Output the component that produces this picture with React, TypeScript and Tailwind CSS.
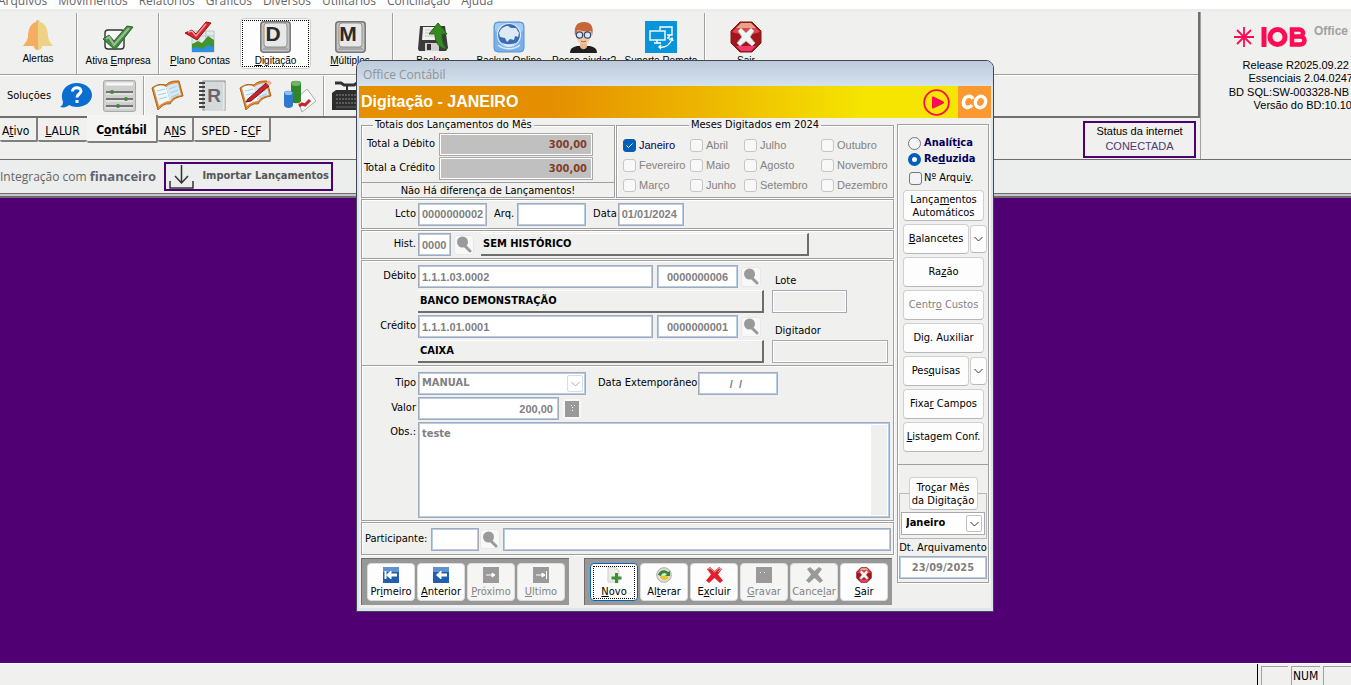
import { ReactNode } from "react";
import clsx from "clsx";

const tahoma = "font-['DejaVu_Sans_Condensed','DejaVu_Sans',sans-serif]";
const arial = "font-['Liberation_Sans',Arial,sans-serif]";
const segoe = "font-['Open_Sans','Noto_Sans',sans-serif]";
const etched = "border border-[#a0a0a0] shadow-[inset_1px_1px_0_#fff,1px_1px_0_#fff]";
const frame = "border border-[#a3a9b5] bg-white shadow-[inset_0_0_0_1px_#b5cdea]";
const field = "h-[23px] px-[3px] text-[11px] font-bold text-[#808080] outline-none";

/* underlines the access key, marked with & in the text */
function Label({ text }: { text: string }) {
    const i = text.indexOf("&");
    if (i < 0) return <>{text}</>;
    return (
        <>
            {text.slice(0, i)}<u>{text[i + 1]}</u>{text.slice(i + 2)}
        </>
    );
}

function BellIcon() {
    return (
        <svg width="30" height="30" viewBox="0 0 30 30">
            <path d="M15 0c-2 0-2 2-2 2C7 4 6 8 5 15c0 5-2 7-5 11h15z" fill="#f3ae62" />
            <path d="M15 0c2 0 2 2 2 2 6 2 7 6 8 13 0 5 2 7 5 11H15z" fill="#eed384" />
            <path d="M11 26h4v4c-3 0-4-2-4-4z" fill="#f3ae62" />
            <path d="M15 26h4c0 2-1 4-4 4z" fill="#eed384" />
        </svg>
    );
}

function CheckBoxIcon() {
    return (
        <svg width="32" height="32" viewBox="0 0 32 32">
            <rect x="3" y="9" width="19" height="19" rx="3" fill="#f8f8f8" stroke="#333" strokeWidth="1.4" />
            <path d="M1 18l6-4 5 6L25 5l6 1-18 23z" fill="#3f8f3a" stroke="#2c6a28" />
            <path d="M4 18l3-2 5 8L27 7" fill="none" stroke="#a5b8a5" strokeWidth="2" />
        </svg>
    );
}

function PlanIcon() {
    return (
        <svg width="32" height="32" viewBox="0 0 32 32">
            <rect x="8" y="10" width="22" height="21" fill="#e1e9ec" stroke="#b9c4ca" />
            <path d="M8 15h22M15 10v10M22 10v10" stroke="#b9c4ca" />
            <path d="M8 23l6-3 4 2 6-7 6 4v9H8z" fill="#43952b" />
            <path d="M8 27l5-1 5 2 6-4 6 2v5H8z" fill="#2d8fe0" />
            <path d="M1 12l7-3 4 4L22 1l5 1-14 17z" fill="#d9262c" stroke="#8e1216" />
            <path d="M4 11l4-1 4 5L22 3" fill="none" stroke="#f4a0a0" strokeWidth="1.3" />
        </svg>
    );
}

function KeyIcon({ letter }: { letter: string }) {
    return (
        <svg width="31" height="32" viewBox="0 0 31 32">
            <rect x="0.8" y="0.8" width="29.4" height="30.4" rx="3" fill="#c4c4c4" stroke="#757575" strokeWidth="1.5" />
            <path d="M2 29l4-4h19l4 4z" fill="#a8a8a8" />
            <rect x="4" y="2" width="23" height="24" rx="3" fill="#e8e8e8" stroke="#909090" />
            <text x="13" y="20" textAnchor="middle" fontFamily="Liberation Sans" fontWeight="bold" fontSize="21" fill="#2b2b2b">{letter}</text>
        </svg>
    );
}

function BackupIcon() {
    return (
        <svg width="32" height="32" viewBox="0 0 32 32">
            <path d="M3 5h25l3 22-2 3H2l-1-2z" fill="#3b3b3b" />
            <path d="M6 6h18l1 13H5z" fill="#f0f0f0" />
            <path d="M8 9h13M8 12h13M8 15h13" stroke="#c5c5c5" />
            <rect x="8" y="22" width="14" height="8" fill="#cfcfcf" />
            <rect x="10" y="23" width="4" height="6" fill="#333" />
            <path d="M21 2l9 11h-5c0 7 1 11 5 15-8-1-12-6-12-15h-6z" fill="#358a22" stroke="#236614" />
        </svg>
    );
}

function GlobeIcon() {
    return (
        <svg width="32" height="32" viewBox="0 0 32 32">
            <rect x="1" y="1" width="30" height="30" rx="4" fill="#78b0ea" stroke="#5b92d0" />
            <rect x="2" y="2" width="28" height="9" rx="3" fill="#a5cdf4" />
            <circle cx="16" cy="14" r="11.5" fill="#3a6db4" stroke="#e1edf9" strokeWidth="1.2" />
            <path d="M6 12c2-5 5-7 9-7l3 2 5 0 3 5-1 4-3-1-1 4-4-1-3 3-2-4-5-1z" fill="#dfe9f5" />
            <path d="M8 21c4 3 12 3 16 0l-3 3c-3 2-7 2-10 0z" fill="#dfe9f5" />
            <path d="M5 24c6 5 16 5 22 0" stroke="#e1edf9" strokeWidth="1.5" fill="none" />
        </svg>
    );
}

function PersonIcon() {
    return (
        <svg width="30" height="32" viewBox="0 0 30 32">
            <path d="M1 32c0-5 4-7 9-7h9c5 0 9 2 9 7z" fill="#1f1f1f" />
            <path d="M11 20h7v6c-2 3-5 3-7 0z" fill="#e8b890" />
            <ellipse cx="14.5" cy="14" rx="7.5" ry="9" fill="#f1cba6" />
            <path d="M6 15C5 6 7 1 15 1s10 6 8 14l-1-5c-4 1-9 0-13-1-1 1-2 3-3 6z" fill="#c76638" />
            <circle cx="10.5" cy="14" r="3.2" fill="#dce6f2" stroke="#37446b" strokeWidth="1.2" />
            <circle cx="18.5" cy="14" r="3.2" fill="#dce6f2" stroke="#37446b" strokeWidth="1.2" />
            <path d="M12 20c1 1 4 1 5 0" stroke="#c8463b" fill="none" />
        </svg>
    );
}

function RemoteIcon() {
    return (
        <svg width="32" height="32" viewBox="0 0 32 32" fill="none" stroke="#fff" strokeWidth="1.4">
            <rect width="32" height="32" fill="#0894da" stroke="none" />
            <path d="M15 9V6h12v8h-5M24 14v3h-2" />
            <rect x="5" y="10" width="15" height="9" fill="#0894da" />
            <path d="M12 19v3M9 22h7M14 26c6 1 11-2 13-8M24 19l3-2 1 3M16 24l-2 2 2 2" />
        </svg>
    );
}

function StopIcon({ size }: { size: number }) {
    return (
        <svg width={size} height={size} viewBox="0 0 32 32">
            <path d="M10 1h12l9 9v12l-9 9H10l-9-9V10z" fill="#a3161c" stroke="#80181a" />
            <path d="M11 2h10l5 5H6z" fill="#e8a489" />
            <path d="M6 7h20l4 4c-8 3-20 3-28 0z" fill="#e2444c" />
            <path d="M6 25h20l-5 5H11z" fill="#f2396a" />
            <path d="M8 10l3-3 5 5 5-5 3 3-4 6 5 6-3 3-6-5-6 5-3-3 5-6z" fill="#f4f4f4" stroke="#b9b9b9" />
        </svg>
    );
}

function HelpIcon() {
    return (
        <svg width="32" height="26" viewBox="0 0 32 26">
            <path d="M17 0c8 0 15 5 15 12s-7 12-15 12c-3 0-6-1-8-2-2 2-5 3-9 2 2-1 3-3 3-5-4-10 3-19 14-19z" fill="#0a6ed1" />
            <path d="M12.500 8.500c0-5 8.500-5 8.500-.5 0 3-4 3-4 6.500M17 17v3" fill="none" stroke="#fff" strokeWidth="3" />
        </svg>
    );
}

function SlidersIcon() {
    return (
        <svg width="33" height="32" viewBox="0 0 33 32">
            <rect x="0.5" y="0.5" width="32" height="31" rx="2" fill="#cfcfcf" stroke="#aaa" />
            <path d="M3 4h27" stroke="#f7f7f7" strokeWidth="3" />
            <path d="M3 12h27M3 19h27M3 26h27" stroke="#555" strokeWidth="1.6" />
            <path d="M3 14h27M3 21h27M3 28h27" stroke="#f5f5f5" />
            <circle cx="9" cy="12" r="2" fill="#43853a" />
            <circle cx="23" cy="19" r="2" fill="#43853a" />
            <circle cx="15" cy="26" r="2" fill="#43853a" />
        </svg>
    );
}

function BookIcon({ pencil }: { pencil?: boolean }) {
    return (
        <svg width="33" height="32" viewBox="0 0 33 32">
            <path d="M1 8c5-4 9-4 14-3 4-4 8-4 13-4l4 15c-6 1-10 3-13 8-5-1-8 2-12 6z" fill="#e08a35" stroke="#a95e1b" />
            <path d="M3 8c4-3 8-3 12-1l4 14c-4 0-8 2-11 5z" fill="#eef7fc" />
            <path d="M15 7c4-3 8-4 12-4l3 12c-5 1-8 2-11 6z" fill="#d3e9f7" />
            <path d="M6 11l8-2M7 15l8-2M8 19l8-2M18 9l8-3M19 13l8-3M20 17l8-3" stroke="#a9cce2" />
            {pencil && (
                <>
                    <path d="M9 19L27 3l3 3-18 15-5 1z" fill="#c8222a" stroke="#7e1216" />
                    <path d="M27 3l3-3 3 3-3 3z" fill="#e9b3a2" />
                </>
            )}
        </svg>
    );
}

function NotebookIcon() {
    return (
        <svg width="29" height="32" viewBox="0 0 29 32">
            <rect x="5" y="1" width="22" height="29" fill="#d6d9da" stroke="#8d9294" />
            <path d="M26 3v27H7" stroke="#f7f7f7" fill="none" />
            <path d="M1 3h6M1 7h6M1 11h6M1 15h6M1 19h6M1 23h6M1 27h6" stroke="#444" strokeWidth="1.8" />
            <text x="16" y="22" textAnchor="middle" fontFamily="Liberation Sans" fontWeight="bold" fontSize="19" fill="#63666e">R</text>
        </svg>
    );
}

function ChartIcon() {
    return (
        <svg width="33" height="33" viewBox="0 0 33 33">
            <path d="M14 18l10-9 9 12-14 11z" fill="#f9f9f9" stroke="#aaa" />
            <path d="M16 26l3-2 3 1 5-5" stroke="#c8222a" strokeWidth="3" fill="none" />
            <path d="M8 3c0-3 10-3 10 0v18c0 3-10 3-10 0z" fill="#31852d" />
            <ellipse cx="13" cy="3.500" rx="4.500" ry="2.500" fill="#71b568" />
            <path d="M1 13c0-3 9-3 9 0v12c0 4-9 4-9 0z" fill="#2f78cf" />
            <ellipse cx="5.500" cy="13" rx="4" ry="2" fill="#8cc1f0" />
        </svg>
    );
}

function CalculatorIcon() {
    return (
        <svg width="36" height="30" viewBox="0 0 36 30">
            <path d="M4 2h6l3 2h10l3-2h9" stroke="#333" strokeWidth="3" fill="none" />
            <path d="M16 4v5" stroke="#333" strokeWidth="2" />
            <path d="M1 12l4-3h31v20H1z" fill="#2d2d2d" />
            <path d="M5 14h28M5 18h28M5 22h28" stroke="#8a8a8a" strokeDasharray="2 1" />
            <path d="M5 26h25" stroke="#666" />
        </svg>
    );
}

function SearchButton({ label }: { label: string }) {
    return (
        <button aria-label={label} className="flex size-[20px] shrink-0 items-center justify-center rounded-[3px] border border-[#e8e8e8] bg-[#f8f8f8]">
            <svg width="16" height="17" viewBox="0 0 16 17">
                <circle cx="6.500" cy="6" r="5.500" fill="#9a9a9a" />
                <path d="M8 9l6 6" stroke="#9a9a9a" strokeWidth="3" strokeLinecap="round" />
            </svg>
        </button>
    );
}

/* toolbar button of the main window */
function Tool({ text, icon, className }: { text: string; icon: ReactNode; className: string }) {
    return (
        <button className={clsx("flex shrink-0 flex-col items-center whitespace-nowrap text-[10px] leading-[14px] text-black", arial, className)}>
            <span className="flex h-[32px] items-center">{icon}</span>
            <span className="pt-px"><Label text={text} /></span>
        </button>
    );
}

function Separator() {
    return <div className="w-[2px] shrink-0 self-stretch border-l border-r border-l-[#a0a0a0] border-r-white" />;
}

const menus = ["Arquivos", "Movimentos", "Relatórios", "Gráficos", "Diversos", "Utilitários", "Conciliação", "Ajuda"];
const tab = "h-[24px] rounded-b-[2px] border-b-2 border-[#808080] pt-[4px]";

function Header() {
    return (
        <header className="shrink-0">
            <nav className={clsx("flex h-[12px] items-end gap-[11px] overflow-hidden border-b-[3px] border-[#ececec] bg-white text-[12px] leading-[14px] text-[#666]", segoe)}>
                {menus.map((m) => <a href="#" key={m} className="mb-px first:-ml-[2px]">{m}</a>)}
            </nav>
            <div className="flex bg-[#f0f0ee]">
                <div className="min-w-0 flex-1">
                    <div className="border-r-2 border-b-2 border-[#6d6d6d]">
                        <div className="flex h-[63px] overflow-hidden border-b border-[#a0a0a0] pt-px">
                            <Tool text="Alertas" icon={<BellIcon />} className="w-[76px] pt-[6px]" />
                            <Separator />
                            <Tool text="Ativa &Empresa" icon={<CheckBoxIcon />} className="w-[80px] pt-[8px]" />
                            <Separator />
                            <Tool text="&Plano Contas" icon={<PlanIcon />} className="w-[80px] pt-[8px]" />
                            <div className="my-[5px] flex w-[71px] shrink-0 rounded-[4px] border border-[#cfcfcf] bg-[#fdfdfd] p-px">
                                <Tool text="&Digitação" icon={<KeyIcon letter="D" />} className="w-full border border-dotted border-black" />
                            </div>
                            <Tool text="&Múltiplos" icon={<KeyIcon letter="M" />} className="w-[78px] pt-[8px]" />
                            <div className="w-[3px] shrink-0" />
                            <Separator />
                            <Tool text="Backup" icon={<BackupIcon />} className="w-[78px] pt-[8px]" />
                            <Tool text="Backup Online" icon={<GlobeIcon />} className="w-[74px] pt-[8px]" />
                            <Tool text="Posso ajudar?" icon={<PersonIcon />} className="w-[76px] pt-[8px]" />
                            <Tool text="Suporte Remoto" icon={<RemoteIcon />} className="w-[78px] pt-[8px]" />
                            <div className="w-[4px] shrink-0" />
                            <Separator />
                            <Tool text="Sair" icon={<StopIcon size={32} />} className="w-[80px] pt-[8px]" />
                        </div>
                        <div className={clsx("flex h-[41px] items-center overflow-hidden border-t border-white pl-[7px] text-[11px]", tahoma)}>
                            <span className="w-[53px] shrink-0">Soluções</span>
                            <button aria-label="Ajuda" className="mr-[11px]"><HelpIcon /></button>
                            <button aria-label="Opções" className="mr-[7px]"><SlidersIcon /></button>
                            <Separator />
                            <button aria-label="Livro" className="ml-[6px]"><BookIcon /></button>
                            <button aria-label="Razão" className="ml-[14px]"><NotebookIcon /></button>
                            <button aria-label="Editar livro" className="ml-[12px]"><BookIcon pencil /></button>
                            <button aria-label="Gráficos" className="mr-[7px] ml-[11px]"><ChartIcon /></button>
                            <Separator />
                            <button aria-label="Calculadora" className="ml-[6px]"><CalculatorIcon /></button>
                        </div>
                    </div>
                    <div className="flex h-[41px] items-start justify-between">
                        <div className={clsx("flex items-start text-[12px] leading-[16px]", tahoma)}>
                            <button className={clsx(tab, "w-[38px] border-r-2 pl-[2px] text-left")}><Label text="A&tivo" /></button>
                            <button className={clsx(tab, "w-[49px]")}><Label text="&LALUR" /></button>
                            <button className="-mt-[3px] h-[28px] w-[71px] rounded-b-[2px] border-r-2 border-b-2 border-[#808080] bg-[#f4f4f3] pt-[4px] text-[12px] font-bold"><Label text="C&ontábil" /></button>
                            <button className={clsx(tab, "w-[36px] border-r-2")}><Label text="A&NS" /></button>
                            <button className={clsx(tab, "w-[77px] border-r-2")}><Label text="SPED - E&CF" /></button>
                        </div>
                        <div className={clsx("mt-[3px] mr-[4px] h-[37px] w-[113px] border-2 border-[#4b0170] text-center text-[11px] leading-[15px]", arial)}>
                            <p className="pt-px">Status da internet</p>
                            <p className="text-[#4b3b78]">CONECTADA</p>
                        </div>
                    </div>
                </div>
                <aside className={clsx("w-[151px] shrink-0 overflow-hidden border-l border-[#a0a0a0] pt-[13px] text-right text-[11px] leading-[13px] whitespace-nowrap", arial)}>
                    <div className="mb-[10px] flex items-start justify-end gap-[5px] pr-[3px]">
                        <svg width="76" height="24" viewBox="0 0 76 24" aria-label="IOB">
                            <g stroke="#ff0a54" strokeWidth="1.800">
                                <path d="M11 2v20M1 12h20M4 5l14 14M18 5L4 19" />
                            </g>
                            <g fill="none" stroke="#ff0a54" strokeWidth="5">
                                <path d="M31 2v20" />
                                <circle cx="44.500" cy="12" r="7.500" />
                                <path d="M59 4.500h7.500a3.500 3.500 0 010 7h-7.500zM59 11.500h8.500a4 4 0 010 8h-8.500z" strokeWidth="4.500" />
                            </g>
                        </svg>
                        <span className="text-[12px] font-bold text-[#a0a0a0]">Office</span>
                    </div>
                    <p className="pr-[2px]">Release R2025.09.22</p>
                    <p className="-mr-[2px]">Essenciais 2.04.0247</p>
                    <p className="pt-px pr-[2px]">BD SQL:SW-003328-NB</p>
                    <p className="-mr-px">Versão do BD:10.10</p>
                </aside>
            </div>
            <div className={clsx("flex h-[35px] items-center border-y border-[#6d6d6d] bg-[#ebeeed] text-[12px] text-[#666]", segoe)}>
                <p className="w-[164px] shrink-0 whitespace-nowrap">Integração com <b className="text-[13px] text-[#5e6570]">financeiro</b></p>
                <button className={clsx("flex h-[29px] w-[169px] items-center justify-between border-2 border-[#4b0170] pr-[2px] pl-[3px] text-[11px] font-bold whitespace-nowrap text-[#555]", tahoma)}>
                    <svg width="25" height="24" viewBox="0 0 25 24" fill="none" stroke="#333" strokeWidth="1.500">
                        <path d="M12.500 0v18M6 11l6.500 7 6.500-7M1 16v7h23v-7" />
                    </svg>
                    Importar Lançamentos
                </button>
            </div>
            <div className="h-[4px] border-b-2 border-[#6d6d6d] bg-[#c5c5c5]" />
        </header>
    );
}

const months = [
    "Janeiro", "Abril", "Julho", "Outubro",
    "Fevereiro", "Maio", "Agosto", "Novembro",
    "Março", "Junho", "Setembro", "Dezembro",
];

function Months() {
    return (
        <fieldset className={clsx("min-w-0 flex-1", etched)}>
            <legend className="mx-auto px-[2px] leading-[12px]">Meses Digitados em 2024</legend>
            <div className={clsx("grid grid-cols-[67px_54px_77px_1fr] gap-y-[5px] pt-[7px] pl-[6px] leading-[15px]", arial)}>
                {months.map((m) => (
                    <label key={m} className={clsx("flex items-center gap-[3px]", m === "Janeiro" ? "text-[#000060]" : "text-[#838383]")}>
                        <span className="relative flex">
                            <input type="checkbox" defaultChecked={m === "Janeiro"} disabled={m !== "Janeiro"}
                                className="size-[13px] appearance-none rounded-[3px] border border-[#c6c6c6] bg-[#f8f8f8] checked:border-[#005fb8] checked:bg-[#005fb8]" />
                            {m === "Janeiro" && (
                                <svg className="pointer-events-none absolute inset-0" width="13" height="13" viewBox="0 0 13 13">
                                    <path d="M3.500 6.500l2 2 4-4" stroke="#fff" fill="none" />
                                </svg>
                            )}
                        </span>
                        {m}
                    </label>
                ))}
            </div>
        </fieldset>
    );
}

function Totals() {
    return (
        <fieldset className={clsx("w-[254px] shrink-0", etched)}>
            <legend className="ml-[11px] px-[2px] leading-[12px]">Totais dos Lançamentos do Mês</legend>
            <div className="flex flex-col gap-px pt-[2px] pb-[2px]">
                {["Total a Débito", "Total a Crédito"].map((t) => (
                    <div key={t} className="flex items-center justify-end gap-[4px] pr-[21px]">
                        <label htmlFor={t}>{t}</label>
                        <input id={t} readOnly value="300,00"
                            className="h-[23px] w-[154px] border border-[#a8a8a8] bg-[#c0c0c0] pr-[5px] text-right font-bold text-[#843c24] shadow-[inset_0_0_0_1px_#fff] outline-none" />
                    </div>
                ))}
            </div>
            <p className="border-t border-[#a0a0a0] text-center leading-[15px]">Não Há diferença de Lançamentos!</p>
        </fieldset>
    );
}

function Raised({ text, className }: { text?: string; className?: string }) {
    return (
        <div className={clsx("h-[23px] border-t border-r-2 border-b-2 border-t-white border-r-[#6d6d6d] border-b-[#6d6d6d] pl-[2px] leading-[20px] font-bold", className)}>{text}</div>
    );
}

const rowLabel = "w-[54px] shrink-0 text-right";

function Account({ label, code, short, name }: { label: string; code: string; short: string; name: string }) {
    return (
        <>
            <div className="flex items-center">
                <label htmlFor={label} className={rowLabel}>{label}</label>
                <input id={label} defaultValue={code} className={clsx(frame, field, arial, "ml-[2px] w-[235px]")} />
                <input aria-label={label + " reduzido"} defaultValue={short} className={clsx(frame, field, arial, "mr-[3px] ml-[4px] w-[81px] text-center")} />
                <SearchButton label={"Pesquisar " + label} />
            </div>
            <Raised text={name} className="ml-[56px] w-[346px]" />
        </>
    );
}

function Extra({ label, width }: { label: string; width: string }) {
    return (
        <>
            <label htmlFor={label} className="h-[23px] pt-[9px] pl-[3px] leading-[14px]">{label}</label>
            <input id={label} className={clsx("h-[23px] border border-[#a8a8b0] bg-[#efefee] shadow-[inset_0_0_0_1px_#fff] outline-none", width)} />
        </>
    );
}

function EntryForm() {
    return (
        <div className="flex flex-col">
            <div className={clsx("mt-px flex h-[30px] items-center", etched)}>
                <label htmlFor="lcto" className={rowLabel}>Lcto</label>
                <input id="lcto" defaultValue="0000000002" className={clsx(frame, field, arial, "ml-[2px] w-[69px]")} />
                <label htmlFor="arq" className="mr-[3px] ml-[7px]">Arq.</label>
                <input id="arq" className={clsx(frame, field, arial, "w-[69px]")} />
                <label htmlFor="data" className="mr-px ml-[7px]">Data</label>
                <input id="data" defaultValue="01/01/2024" className={clsx(frame, field, arial, "w-[66px]")} />
            </div>
            <div className={clsx("mt-px flex h-[29px] items-center", etched)}>
                <label htmlFor="hist" className={rowLabel}>Hist.</label>
                <input id="hist" defaultValue="0000" className={clsx(frame, field, arial, "mr-[3px] ml-[2px] w-[33px]")} />
                <SearchButton label="Pesquisar histórico" />
                <Raised text="SEM HISTÓRICO" className="ml-[7px] w-[328px]" />
            </div>
            <div className={clsx("mt-px flex h-[106px] pt-[4px]", etched)}>
                <div className="flex flex-col gap-[2px]">
                    <Account label="Débito" code="1.1.1.03.0002" short="0000000006" name="BANCO DEMONSTRAÇÃO" />
                    <Account label="Crédito" code="1.1.1.01.0001" short="0000000001" name="CAIXA" />
                </div>
                <div className="ml-[8px] flex flex-col gap-[2px]">
                    <Extra label="Lote" width="w-[75px]" />
                    <Extra label="Digitador" width="w-[116px]" />
                </div>
            </div>
            <div className={clsx("flex h-[155px] flex-col gap-[2px] border-t-0 pt-[6px]", etched)}>
                <div className="flex items-center">
                    <label htmlFor="tipo" className={rowLabel}>Tipo</label>
                    <span className="relative ml-[2px] flex w-[168px]">
                        <select id="tipo" className={clsx(frame, field, "w-full appearance-none")}>
                            <option>MANUAL</option>
                        </select>
                        <Chevron className="border-[#dcdcdc] text-[#aaa]" />
                    </span>
                    <label htmlFor="ext" className="mr-px ml-[12px] whitespace-nowrap">Data Extemporâneo</label>
                    <input id="ext" defaultValue="/  /" className={clsx(frame, field, arial, "w-[80px] pr-[8px]! text-center")} />
                </div>
                <div className="flex items-center">
                    <label htmlFor="valor" className={rowLabel}>Valor</label>
                    <input id="valor" defaultValue="200,00" className={clsx(frame, field, arial, "mr-[4px] ml-[2px] w-[141px] pr-[5px]! text-right")} />
                    <button aria-label="Calcular" className="flex rounded-[3px] border-2 border-[#f8f8f8]">
                        <svg width="14" height="16" viewBox="0 0 14 16">
                            <rect width="14" height="16" fill="#9a9a9a" />
                            <path d="M6 4.500h1M9 4.500h1M7 6.500h1M7 9.500h1" stroke="#fff" />
                        </svg>
                    </button>
                </div>
                <div className="flex items-start">
                    <label htmlFor="obs" className={clsx(rowLabel, "pt-[2px]")}>Obs.:</label>
                    <div className={clsx("mr-[3px] ml-[2px] flex h-[96px] flex-1 p-[2px]", frame)}>
                        <textarea id="obs" defaultValue="teste" className="min-w-0 flex-1 resize-none px-px text-[11px] leading-[17px] font-bold text-[#808080] outline-none" />
                        <div className="w-[16px] bg-[#efefee]" />
                    </div>
                </div>
            </div>
            <div className={clsx("mt-px flex h-[33px] items-center pt-px pr-[2px] pl-[3px]", etched)}>
                <label htmlFor="part" className="w-[66px] shrink-0">Participante:</label>
                <input id="part" className={clsx(frame, field, "mr-px w-[48px]")} />
                <SearchButton label="Pesquisar participante" />
                <input aria-label="Nome do participante" className={clsx(frame, field, "ml-[3px] min-w-0 flex-1")} />
            </div>
        </div>
    );
}

function Chevron({ className }: { className?: string }) {
    return (
        <span className={clsx("pointer-events-none absolute inset-y-[3px] right-[3px] flex w-[16px] items-center justify-center rounded-[2px] border bg-white", className)}>
            <svg width="9" height="6" viewBox="0 0 9 6" fill="none" stroke="currentColor"><path d="M0.500 1l4 4 4-4" /></svg>
        </span>
    );
}

function ArrowIcon({ dir, bar, off }: { dir: "left" | "right"; bar?: boolean; off?: boolean }) {
    return (
        <svg width="16" height="16" viewBox="0 0 16 16">
            <rect width="16" height="16" fill={off ? "#9a9a9a" : "#1f5fae"} />
            {!off && <rect width="16" height="5" fill="#5f93cf" />}
            <g transform={dir === "right" ? "matrix(-1 0 0 1 16 0)" : undefined} stroke="#fff" fill="#fff">
                <path d={off ? "M4 8h9" : "M6 8h8"} strokeWidth={off ? 1 : 3} />
                <path d={off ? "M4 8l3-2v4z" : "M3.500 8l4.500-4v8z"} />
                {bar && <path d="M2.500 4v8" strokeWidth={off ? 1 : 2} />}
            </g>
        </svg>
    );
}

function CrossIcon({ off }: { off?: boolean }) {
    return (
        <svg width="17" height="16" viewBox="0 0 17 16">
            <path d="M1 2l3-2 4.500 4L13 0l3 2-4 5.500 5 6-3 2.500-5.500-5L3 16l-3-2.500 5-6z" fill={off ? "#9a9a9a" : "#e0202c"} />
            {!off && <path d="M2 2l2-1 4.500 4L13 1l2 1-3 3" stroke="#f0a59a" fill="none" />}
        </svg>
    );
}

function NewIcon() {
    return (
        <svg width="16" height="16" viewBox="0 0 16 16">
            <path d="M2 0h7l4 4v11H2z" fill="#eeeee9" stroke="#cfcfca" />
            <path d="M10.500 6v10M5.500 11h10" stroke="#3c8f38" strokeWidth="3" />
        </svg>
    );
}

function RefreshIcon() {
    return (
        <svg width="16" height="16" viewBox="0 0 16 16">
            <circle cx="8" cy="8" r="7.300" fill="#dedede" stroke="#aaa" />
            <path d="M2 8c1-5 7-6 10-3l2-1v5H9l2-2c-3-2-5-1-6 2z" fill="#358a2b" />
            <path d="M5 9h5l3 1c-2 4-7 4-9 0z" fill="#e5c729" />
        </svg>
    );
}

const navButtons = [
    { text: "Pr&imeiro", icon: <ArrowIcon dir="left" bar /> },
    { text: "&Anterior", icon: <ArrowIcon dir="left" /> },
    { text: "&Próximo", icon: <ArrowIcon dir="right" off />, off: true },
    { text: "&Ultimo", icon: <ArrowIcon dir="right" bar off />, off: true },
];

const actionButtons = [
    { text: "&Novo", icon: <NewIcon />, focus: true },
    { text: "Al&terar", icon: <RefreshIcon /> },
    { text: "E&xcluir", icon: <CrossIcon /> },
    {
        text: "&Gravar", off: true,
        icon: <svg width="16" height="16" viewBox="0 0 16 16"><rect width="16" height="16" fill="#9a9a9a" /><path d="M4 5.500h1M8 5.500h1" stroke="#fff" /></svg>,
    },
    { text: "Cance&lar", icon: <CrossIcon off />, off: true },
    { text: "&Sair", icon: <StopIcon size={16} /> },
];

type Action = { text: string; icon: ReactNode; off?: boolean; focus?: boolean };

function ActionPanel({ items }: { items: Action[] }) {
    return (
        <div className="flex h-[47px] gap-[2px] border-t border-l border-[#6d6d6d] bg-[#989898] py-[4px] pr-[4px] pl-[5px]">
            {items.map((b) => (
                <button key={b.text} disabled={b.off}
                    className={clsx("flex h-[38px] w-[48px] flex-col items-center rounded-[4px] border p-[2px] leading-[14px]",
                        b.off ? "border-[#d5d5d5] bg-[#f5f5f4] text-[#838383]" : "bg-[#fdfdfd]",
                        b.focus ? "border-[#0067c0]" : "border-[#dcdcdc]")}>
                    <span className={clsx("flex w-full flex-1 flex-col items-center pt-px", b.focus && "outline-1 -outline-offset-1 outline-black outline-dotted")}>
                        {b.icon}
                        <span className="pt-[2px]"><Label text={b.text} /></span>
                    </span>
                </button>
            ))}
        </div>
    );
}

const sideButtons = [
    { text: "&Balancetes", split: true },
    { text: "Ra&zão" },
    { text: "Centr&o Custos", off: true },
    { text: "Di&g. Auxiliar" },
    { text: "Pes&quisas", split: true },
    { text: "Fixa&r Campos" },
    { text: "&Listagem Conf." },
];

const sideButton = "rounded-[4px] border border-[#d0d0d0] border-b-[#b8b8b8] bg-[#fdfdfd] whitespace-nowrap";

function SideBar() {
    return (
        <div className={clsx("mt-[6px] flex h-[459px] w-[92px] shrink-0 flex-col", etched)}>
            <div className="flex flex-col pt-[10px] pl-[10px] text-[11px] leading-[16px] font-bold text-[#000060]">
                <label className="flex items-center gap-[3px]">
                    <input type="radio" name="view" className="size-[13px] appearance-none rounded-full border border-[#777] bg-[#f4f4f8]" />
                    <span><Label text="Analít&ica" /></span>
                </label>
                <label className="flex items-center gap-[3px]">
                    <input type="radio" name="view" defaultChecked className="size-[13px] appearance-none rounded-full border-4 border-[#005fb8] bg-white" />
                    <span><Label text="Re&duzida" /></span>
                </label>
                <label className="mt-[3px] flex items-center gap-[2px] pl-px font-normal text-black">
                    <input type="checkbox" className="size-[13px] appearance-none rounded-[3px] border border-[#777] bg-[#f4f4f8]" />
                    <span className="whitespace-nowrap"><Label text="Nº Arqui&v." /></span>
                </label>
            </div>
            <div className="mt-[4px] mr-[4px] ml-[5px] flex flex-col gap-[3px]">
                <button className={clsx(sideButton, "h-[31px] leading-[13px]")}><Label text="Lança&mentos" /><br />Automáticos</button>
                {sideButtons.map((b) => (
                    <div key={b.text} className={clsx("flex h-[30px] items-center", b.split && "-mr-[3px] gap-px")}>
                        <button disabled={b.off} className={clsx(sideButton, "h-full min-w-0 flex-1", b.off && "text-[#838383]")}><Label text={b.text} /></button>
                        {b.split && (
                            <button aria-label="Mais opções" className={clsx(sideButton, "flex h-[28px] w-[17px] items-center justify-center rounded-[2px]")}>
                                <svg width="9" height="6" viewBox="0 0 9 6" fill="none" stroke="#333"><path d="M0.500 1l4 4 4-4" /></svg>
                            </button>
                        )}
                    </div>
                ))}
            </div>
            <div className="mt-[12px] flex flex-col border-t border-[#a0a0a0] px-px pt-[12px]">
                <fieldset className="min-w-0 border border-[#b8b8b8] pb-[3px]">
                    <legend className="mx-auto">
                        <button className={clsx(sideButton, "h-[33px] w-[69px] leading-[13px]")}><Label text="Tro&çar Mês" /><br />da Digitação</button>
                    </legend>
                    <span className="relative mx-px mt-[2px] flex">
                        <select aria-label="Mês da digitação" className="h-[23px] w-full appearance-none border border-[#a8a8b0] bg-white pl-[4px] font-bold text-black outline-none">
                            <option>Janeiro</option>
                        </select>
                        <Chevron className="border-[#c0c0c0] text-[#333]" />
                    </span>
                </fieldset>
                <label htmlFor="arquivamento" className="pt-px text-center leading-[16px] whitespace-nowrap">Dt. Arquivamento</label>
                <input id="arquivamento" defaultValue="23/09/2025" className={clsx(frame, field, "w-full text-center")} />
            </div>
        </div>
    );
}

function EntryWindow() {
    return (
        <section className={clsx("absolute top-[60px] left-[356px] w-[638px] overflow-hidden rounded-t-[8px] border border-[#454550] bg-[#dbe5f0] px-[2px] pb-[3px] text-[11px] text-black", tahoma)}>
            <h1 className={clsx("-mx-[2px] flex h-[25px] items-center bg-linear-to-b from-[#bccbda] to-[#d5e2ef] pt-[2px] pl-[6px] text-[12px] text-[#929292]", segoe)}>Office Contábil</h1>
            <div className="flex h-[32px] items-center bg-linear-to-r from-[#e48e00] from-30% via-[#edb900] via-56% to-[#f5e500] to-80%">
                <h2 className={clsx("flex-1 pl-[2px] text-[16px] font-bold text-white", arial)}>Digitação - JANEIRO</h2>
                <button aria-label="Assistir vídeo" className="mr-[8px]">
                    <svg width="27" height="27" viewBox="0 0 27 27">
                        <circle cx="13.500" cy="13.500" r="12.300" fill="none" stroke="#ff0a54" strokeWidth="1.800" />
                        <path d="M10 8.500l10 5L10 18.500z" fill="#ff0a54" stroke="#ff0a54" strokeWidth="2" strokeLinejoin="round" />
                    </svg>
                </button>
                <div className="flex h-full w-[33px] items-center justify-center bg-[#fb9830]">
                    <svg width="27" height="16" viewBox="0 0 27 16" fill="none" stroke="#fff" strokeWidth="3.500" aria-label="CO">
                        <path d="M12 5C10 .5 3.500 1.500 2.500 8 2 14 8 15 11 11" />
                        <ellipse cx="19.500" cy="8" rx="5" ry="5.800" transform="rotate(20 19.500 8)" />
                    </svg>
                </div>
            </div>
            <div className="flex items-start gap-[3px] bg-[#f0f0ee] px-[2px] pb-[3px]">
                <div className="min-w-0 flex-1">
                    <div className="flex h-[80px] items-stretch gap-px pt-px">
                        <Totals />
                        <Months />
                    </div>
                    <EntryForm />
                    <div className="mt-[3px] mr-[2px] flex justify-between">
                        <ActionPanel items={navButtons} />
                        <ActionPanel items={actionButtons} />
                    </div>
                </div>
                <SideBar />
            </div>
        </section>
    );
}

export default function App() {
    return (
        <div className="relative flex min-h-screen flex-col overflow-hidden bg-[#500073] text-black">
            <Header />
            <main className="flex-1">
                <EntryWindow />
            </main>
            <footer className={clsx("flex h-[22px] shrink-0 gap-[3px] border-t border-white bg-[#f0f0ee] text-[12px]", tahoma)}>
                <div className="flex-1 border-r border-black" />
                <div className="mt-[2px] w-[27px] border-t border-l border-[#a0a0a0]" />
                <div className="mt-[2px] w-[29px] border-t border-l border-[#a0a0a0] pl-px leading-[19px]">NUM</div>
                <div className="mt-[2px] w-[28px] border-t border-l border-[#a0a0a0]" />
            </footer>
        </div>
    );
}
